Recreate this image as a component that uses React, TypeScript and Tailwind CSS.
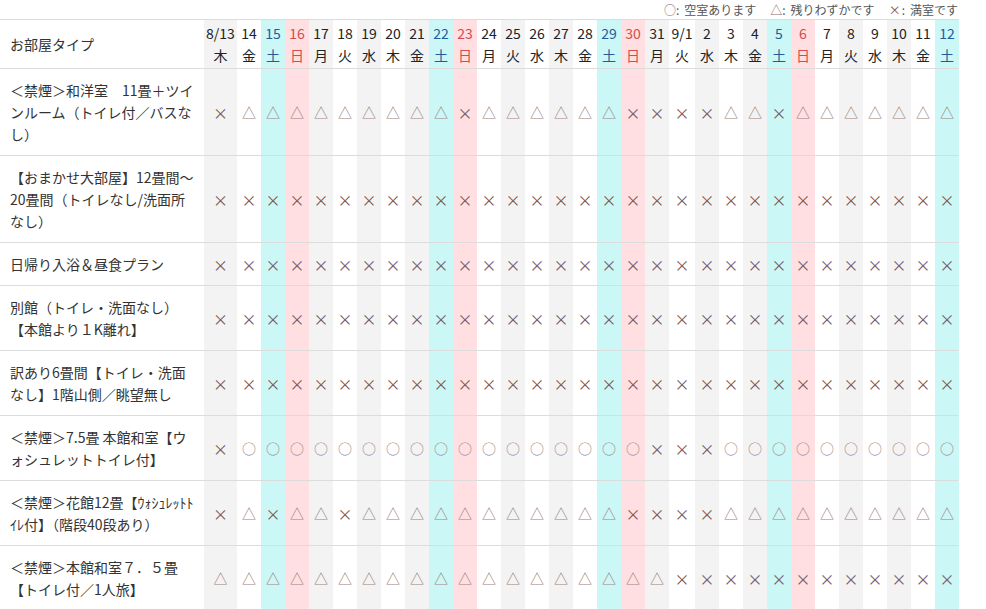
import React from "react";

type Day = { d: string; w: string; kind: "sat" | "sun" | "even" | "odd"; width: string };

const raw: [string, string][] = [
  ["8/13", "木"], ["14", "金"], ["15", "土"], ["16", "日"], ["17", "月"], ["18", "火"], ["19", "水"],
  ["20", "木"], ["21", "金"], ["22", "土"], ["23", "日"], ["24", "月"], ["25", "火"], ["26", "水"],
  ["27", "木"], ["28", "金"], ["29", "土"], ["30", "日"], ["31", "月"], ["9/1", "火"], ["2", "水"],
  ["3", "木"], ["4", "金"], ["5", "土"], ["6", "日"], ["7", "月"], ["8", "火"], ["9", "水"],
  ["10", "木"], ["11", "金"], ["12", "土"],
];

const days: Day[] = raw.map(([d, w], i) => ({
  d,
  w,
  kind: w === "土" ? "sat" : w === "日" ? "sun" : i % 2 === 0 ? "even" : "odd",
  width: d === "8/13" ? "w-[33px]" : d === "9/1" ? "w-[26px]" : "w-[24px]",
}));

const bgFor = (k: Day["kind"]) =>
  k === "sat" ? "bg-[#ccf7f7]" : k === "sun" ? "bg-[#ffdfe1]" : k === "even" ? "bg-[#f3f3f3]" : "bg-white";

const textFor = (k: Day["kind"]) =>
  k === "sat" ? "text-[#1f5c99]" : k === "sun" ? "text-[#d24c4c]" : "text-[#222]";

const rows: { lines: string[]; data: string }[] = [
  {
    lines: ["＜禁煙＞和洋室　11畳＋ツイ", "ンルーム（トイレ付／バスな", "し）"],
    data: "x" + "t".repeat(9) + "x" + "t".repeat(6) + "xxxx" + "tt" + "x" + "t".repeat(7),
  },
  {
    lines: ["【おまかせ大部屋】12畳間～", "20畳間（トイレなし/洗面所", "なし）"],
    data: "x".repeat(31),
  },
  { lines: ["日帰り入浴＆昼食プラン"], data: "x".repeat(31) },
  { lines: ["別館（トイレ・洗面なし）", "【本館より１K離れ】"], data: "x".repeat(31) },
  { lines: ["訳あり6畳間【トイレ・洗面", "なし】1階山側／眺望無し"], data: "x".repeat(31) },
  { lines: ["＜禁煙＞7.5畳 本館和室【ウ", "ォシュレットトイレ付】"], data: "x" + "o".repeat(17) + "xxx" + "o".repeat(10) },
  {
    lines: ["＜禁煙＞花館12畳【ｳｫｼｭﾚｯﾄﾄ", "ｲﾚ付】（階段40段あり）"],
    data: "xtxttx" + "t".repeat(11) + "xxxx" + "t".repeat(10),
  },
  { lines: ["＜禁煙＞本館和室７．５畳", "【トイレ付／1人旅】"], data: "t".repeat(19) + "x".repeat(12) },
];

function Mark({ s }: { s: string }) {
  if (s === "o") return <span className="text-[14px] leading-none text-[#9c8080]">○</span>;
  if (s === "t") return <span className="text-[14px] leading-none text-[#9c8080]">△</span>;
  return <span className="text-[15px] leading-none text-[#7a5656]">×</span>;
}

export default function App() {
  return (
    <div className="w-[986px] h-[609px] overflow-hidden bg-white font-['Noto_Sans_CJK_JP','Noto_Sans',sans-serif] text-[#333]">
      <div className="w-[959px] h-[19px] flex justify-end items-center gap-[14px] text-[12px] leading-none text-[#555] pr-[1px]">
        <span className="flex items-center">
          <span className="text-[#8a6a6a]">○</span>
          <span className="mr-[5px]">:</span>空室あります
        </span>
        <span className="flex items-center">
          <span className="text-[#8a6a6a]">△</span>
          <span className="mr-[5px]">:</span>残りわずかです
        </span>
        <span className="flex items-center">
          <span className="text-[#7a5656]">×</span>
          <span className="mr-[5px] ml-[1px]">:</span>満室です
        </span>
      </div>
      <div className="w-[959px] border-t border-[#dcdcdc]">
        <div className="flex border-b border-[#dcdcdc]">
          <div className="w-[204px] shrink-0 px-[10px] flex items-center text-[14px]">お部屋タイプ</div>
          {days.map((d, i) => (
            <div
              key={i}
              className={`${d.width} shrink-0 ${bgFor(d.kind)} ${textFor(d.kind)} py-[2px] flex flex-col items-center text-[14px] leading-[22px]`}
            >
              <span className="whitespace-nowrap">{d.d}</span>
              <span>{d.w}</span>
            </div>
          ))}
        </div>
        {rows.map((r, ri) => (
          <div key={ri} className="flex border-b border-[#dcdcdc]">
            <div className="w-[204px] shrink-0 pl-[10px] py-[10px] text-[14px] leading-[22px] text-[#333]">
              {r.lines.map((l, li) => (
                <div key={li} className="whitespace-nowrap">{l}</div>
              ))}
            </div>
            {days.map((d, i) => (
              <div key={i} className={`${d.width} shrink-0 ${bgFor(d.kind)} flex items-center justify-center`}>
                <Mark s={r.data[i]} />
              </div>
            ))}
          </div>
        ))}
      </div>
    </div>
  );
}
